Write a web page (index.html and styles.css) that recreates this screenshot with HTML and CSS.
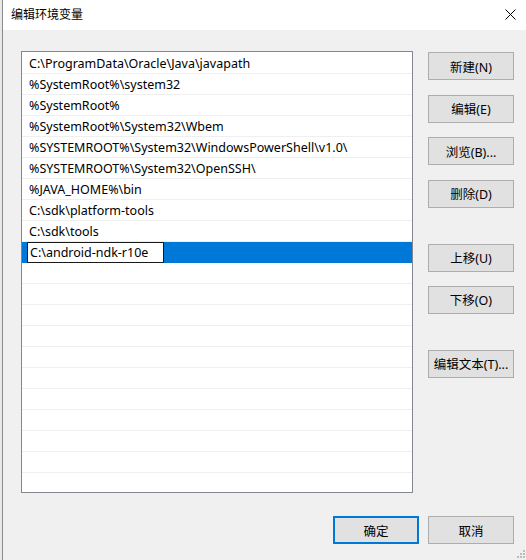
FILE: index.html
```html
<!DOCTYPE html>
<html lang="zh-CN">

<head>
    <meta charset="UTF-8">
    <meta name="viewport" content="width=device-width, initial-scale=1.0">
    <title>编辑环境变量</title>
    <link rel="stylesheet" href="styles.css">
</head>

<body>
    <div class="screen">
        <div class="behind"></div>
        <div class="window">
            <div class="titlebar">
                <span class="title">编辑环境变量</span>
                <svg class="close" width="11" height="11" viewBox="0 0 11 11">
                    <path d="M0.5 0.5 L10.5 10.5 M10.5 0.5 L0.5 10.5" stroke="#000" stroke-width="1" fill="none" />
                </svg>
            </div>
            <div class="client">
                <div class="main">
                    <div class="listbox">
                        <div class="row">C:\ProgramData\Oracle\Java\javapath</div>
                        <div class="row">%SystemRoot%\system32</div>
                        <div class="row">%SystemRoot%</div>
                        <div class="row">%SystemRoot%\System32\Wbem</div>
                        <div class="row">%SYSTEMROOT%\System32\WindowsPowerShell\v1.0\</div>
                        <div class="row">%SYSTEMROOT%\System32\OpenSSH\</div>
                        <div class="row">%JAVA_HOME%\bin</div>
                        <div class="row">C:\sdk\platform-tools</div>
                        <div class="row">C:\sdk\tools</div>
                        <div class="row selected"><span class="edit">C:\android-ndk-r10e</span></div>
                        <div class="row"></div>
                        <div class="row"></div>
                        <div class="row"></div>
                        <div class="row"></div>
                        <div class="row"></div>
                        <div class="row"></div>
                        <div class="row"></div>
                        <div class="row"></div>
                        <div class="row"></div>
                        <div class="row"></div>
                        <div class="row"></div>
                    </div>
                    <div class="side">
                        <div class="group group-a">
                            <button class="btn">新建(N)</button>
                            <button class="btn">编辑(E)</button>
                            <button class="btn">浏览(B)...</button>
                            <button class="btn">删除(D)</button>
                        </div>
                        <div class="group group-b">
                            <button class="btn">上移(U)</button>
                            <button class="btn">下移(O)</button>
                        </div>
                        <div class="group">
                            <button class="btn">编辑文本(T)...</button>
                        </div>
                    </div>
                </div>
                <div class="footer">
                    <button class="btn btn-default">确定</button>
                    <button class="btn">取消</button>
                </div>
            </div>
            <!-- size grip -->
            <svg class="grip" width="8" height="8" viewBox="0 0 8 8">
                <rect x="6" y="0" width="2" height="2" fill="#bdbdbd" />
                <rect x="3" y="3" width="2" height="2" fill="#bdbdbd" />
                <rect x="6" y="3" width="2" height="2" fill="#bdbdbd" />
                <rect x="0" y="6" width="2" height="2" fill="#bdbdbd" />
                <rect x="3" y="6" width="2" height="2" fill="#bdbdbd" />
                <rect x="6" y="6" width="2" height="2" fill="#bdbdbd" />
            </svg>
        </div>
    </div>
</body>

</html>
```

FILE: styles.css
```css
body {
    margin: 0;
    font-family: "Noto Sans", "Noto Sans CJK SC", sans-serif;
    font-size: 12.5px;
    color: #000;
    overflow: hidden;
}

.screen {
    display: flex;
    width: 526px;
    height: 560px;
}

.behind {
    width: 2px;
    background-color: #e8e8e8;
    border-right: 1px solid #8a8a8a;
}

.window {
    position: relative;
    flex: 1;
    display: flex;
    flex-direction: column;
    background-color: #f0f0f0;
}

.titlebar {
    display: flex;
    align-items: center;
    justify-content: space-between;
    height: 30px;
    padding: 0 10px 0 8px;
    background-color: #fff;
}

.title {
    font-size: 12px;
    line-height: 30px;
}

.close {
    margin-top: -1px;
}

.client {
    padding: 21px 12px 0 18px;
}

.main {
    display: flex;
    gap: 15px;
}

.listbox {
    box-sizing: border-box;
    width: 392px;
    height: 442px;
    padding-top: 1px;
    border: 1px solid #828790;
    background-color: #fff;
    overflow: hidden;
}

.row {
    height: 20px;
    line-height: 21px;
    padding-left: 7px;
    border-bottom: 1px solid #efefef;
    white-space: nowrap;
}

.row.selected {
    height: 21px;
    padding-left: 5px;
    border-bottom: none;
    background-color: #0078d7;
}

.edit {
    display: block;
    box-sizing: border-box;
    width: 137px;
    height: 21px;
    line-height: 20px;
    padding-left: 2px;
    border: 1px solid #1a1a1a;
    background-color: #fff;
}

.side {
    display: flex;
    flex-direction: column;
    gap: 36px;
    padding-top: 1px;
}

.group {
    display: flex;
    flex-direction: column;
}

.group-a {
    gap: 14.67px;
}

.group-b {
    gap: 14px;
}

.btn {
    box-sizing: border-box;
    width: 86px;
    height: 28px;
    padding: 0;
    font-family: inherit;
    font-size: 12.5px;
    color: #000;
    background-color: #e1e1e1;
    border: 1px solid #adadad;
}

.btn-default {
    border: 2px solid #0078d7;
}

.footer {
    display: flex;
    justify-content: flex-end;
    gap: 9px;
    margin-top: 23px;
}

.grip {
    position: absolute;
    right: 1px;
    bottom: 2px;
}
```
